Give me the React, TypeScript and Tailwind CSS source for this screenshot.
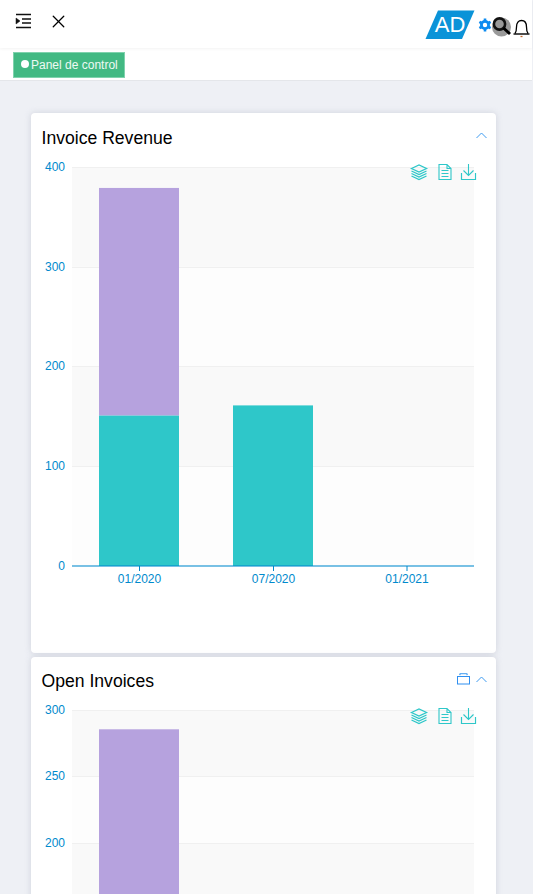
import { X } from "lucide-react"

const AXIS = "#008acd"
const TEAL = "#2ec7c9"
const PURPLE = "#b6a2de"

type Bar = { x: number; stacks: { value: number; color: string }[] }

const X_LABELS = [
	{ x: 108, label: "01/2020" },
	{ x: 242, label: "07/2020" },
	{ x: 375.5, label: "01/2021" },
]

function Chart({ max, step, bars, height, top }: { max: number; step: number; bars: Bar[]; height: number; top: number }) {
	const plotH = 399
	const left = 41
	const right = 443
	const y = (v: number) => top + plotH - (v / max) * plotH
	const snap = (v: number) => Math.floor(y(v) + 0.49)
	const ticks: number[] = []
	for (let v = 0; v <= max; v += step) ticks.push(v)

	return (
		<svg width={465} height={height} className="block" style={{ fontFamily: "'Liberation Sans', sans-serif" }}>
			{/* Bands */}
			{ticks.slice(1).map((v, i) => (
				<rect
					key={v}
					x={left}
					y={y(v)}
					width={right - left}
					height={y(ticks[i]) - y(v)}
					fill={(ticks.length - 2 - i) % 2 === 0 ? "#f9f9f9" : "#fdfdfd"}
				/>
			))}
			{ticks.slice(1).map(v => (
				<line key={v} x1={left} x2={right} y1={snap(v) + 0.5} y2={snap(v) + 0.5} stroke="#f0f0f0" />
			))}

			{/* Bars */}
			{bars.map(bar => {
				let base = 0
				return bar.stacks.map(s => {
					const rect = (
						<rect key={s.color} x={bar.x} y={y(base + s.value)} width={80} height={y(base) - y(base + s.value)} fill={s.color} />
					)
					base += s.value
					return rect
				})
			})}

			{/* Axes */}
			{ticks
				.filter(v => y(v) + 6 < height)
				.map(v => (
					<text key={v} x={34} y={snap(v) + 4} textAnchor="end" fontSize={12} fill={AXIS}>
						{v}
					</text>
				))}
			{top + plotH < height && (
				<>
					<line x1={left} x2={right} y1={top + plotH} y2={top + plotH} stroke={AXIS} strokeOpacity={0.7} strokeWidth={1.5} />
					{X_LABELS.map(l => (
						<g key={l.label}>
							<line x1={l.x + 0.5} x2={l.x + 0.5} y1={top + plotH} y2={top + plotH + 5} stroke={AXIS} />
							<text x={l.x + 0.5} y={top + plotH + 17} textAnchor="middle" fontSize={12} fill={AXIS}>
								{l.label}
							</text>
						</g>
					))}
				</>
			)}

			{/* Toolbox */}
			<g fill="none" stroke={TEAL} strokeWidth={1.1}>
				<path d="M380.5 11.5 L388 8 L395.5 11.5 L388 15 Z" strokeWidth={1.3} />
				<path d="M380.5 14 L388 17.5 L395.5 14 M380.5 16.5 L388 20 L395.5 16.5 M380.5 19 L388 22.5 L395.5 19" strokeWidth={1.3} />
				<path d="M408 7.5 H416 L420 11.5 V22.5 H408 Z M416 7.5 V11.5 H420 M410.5 13.5 H417.5 M410.5 16.5 H417.5 M410.5 19.5 H417.5" />
				<path d="M437.5 7 V18 M432.5 13.5 L437.5 18.5 L442.5 13.5" />
				<path d="M430.5 16 V22.5 H444.5 V16" strokeWidth={1.2} />
			</g>
		</svg>
	)
}

function Card({ title, children, className, extra }: { title: string; children: React.ReactNode; className: string; extra?: boolean }) {
	return (
		<section className={`shrink-0 rounded-[4px] bg-white shadow-[0_0_6px_rgba(170,175,190,0.45)] overflow-hidden ${className}`}>
			<div className="flex h-[44px] items-center justify-between pl-[10.5px] pr-[9px]">
				<h2 className={`text-[17.6px] text-black ${extra ? "pt-[4px]" : "pt-[6px]"}`}>{title}</h2>
				<div className="flex items-center gap-[6px] pt-[1px]">
					{extra && (
						<svg width="13" height="12" viewBox="0 0 13 12" fill="none" className="mb-[2px]">
							<path d="M2.5 2 L3.5 0.5 H9.5 L10.5 2" stroke="#3f9bf0" strokeWidth="1.5" opacity="0.8" />
							<rect x="0.5" y="3.5" width="12" height="7.5" stroke="#2f8ff0" />
						</svg>
					)}
					<svg width="11" height="7" viewBox="0 0 11 7" fill="none">
						<path d="M0.5 6 L5.5 1 L10.5 6" stroke="#3f9bf0" />
					</svg>
				</div>
			</div>
			{children}
		</section>
	)
}

export default function App() {
	return (
		<div className="h-[894px] w-[533px] overflow-hidden bg-[#eef0f5] font-['Liberation_Sans',sans-serif]">
			{/* Top bar */}
			<header className="relative flex h-[48px] w-[532px] items-start justify-between bg-white shadow-[0_1px_3px_rgba(0,0,0,0.05)]">
				<div className="flex items-center gap-[16px] pl-[15px] pt-[11px]">
					<svg width="17" height="16" viewBox="0 0 17 16" fill="none" stroke="#111" strokeWidth="1.5" className="mb-[1px]">
						<path d="M1 1.5 H16 M7 6 H16 M7 10 H16 M1 14.5 H16" />
						<path d="M1 5 L5 8 L1 11 Z" fill="#111" strokeWidth="0.5" />
					</svg>
					<X size={21} strokeWidth={1.5} className="text-black" />
				</div>
				<div className="flex items-start pr-[2px] pt-[10px]">
					<div className="relative h-[29px] w-[50px]">
						<svg width="50" height="29" viewBox="0 0 50 29" className="absolute inset-0">
							<path d="M13 0.5 H49.5 L37 29 H0.5 Z" fill="#0a93d8" />
						</svg>
						<span className="absolute inset-0 text-center text-[22px] leading-[29px] text-white">AD</span>
					</div>
					<svg width="14" height="14" viewBox="0 0 14 14" fill="none" className="mt-[8px] ml-[3px]">
						<circle cx="7" cy="7" r="3.6" stroke="#0d8bf0" strokeWidth="2.8" />
						<path d="M7 0.5 V3 M7 11 V13.5 M1.4 3.8 L3.5 5 M10.5 9 L12.6 10.2 M1.4 10.2 L3.5 9 M10.5 5 L12.6 3.8" stroke="#0d8bf0" strokeWidth="2.6" />
					</svg>
					<svg width="20" height="20" viewBox="0 0 20 20" fill="none" className="mt-[7px]">
						<circle cx="9.5" cy="10" r="9.5" fill="#9a9a9a" />
						<circle cx="7.5" cy="7" r="5.6" stroke="#111" strokeWidth="2.6" />
						<path d="M11.5 11 L18 17" stroke="#000" strokeWidth="3" />
					</svg>
					<svg width="17" height="19" viewBox="0 0 17 19" fill="none" className="mt-[9px] ml-[1px]" stroke="#000" strokeWidth="1.3">
						<path d="M2 14.5 C3.2 13 3.5 11 3.5 8 C3.5 4 5.5 1.5 8.5 1.5 C11.5 1.5 13.5 4 13.5 8 C13.5 11 13.8 13 15 14.5" />
						<path d="M0.5 15 H16.5" strokeWidth="1.4" />
						<path d="M7.5 17.5 H9.5" stroke="#c8692a" />
					</svg>
				</div>
			</header>

			{/* Tabs */}
			<div className="h-[33px] w-[532px] border-b border-[#e4e6ea] bg-white pl-[13px] pt-[4px]">
				<div className="flex h-[26px] w-[112px] items-center gap-[2px] whitespace-nowrap border border-[#7fd2ad] bg-[#42b983] pl-[7px] text-[12px] text-[#eef9f3]">
					<span className="mb-[2px] h-[8px] w-[8px] shrink-0 rounded-full bg-white" />
					Panel de control
				</div>
			</div>

			{/* Cards */}
			<main className="ml-[31px] flex w-[465px] flex-col gap-[4px] pt-[32px]">
				<Card title="Invoice Revenue" className="h-[540px]">
					<Chart
						max={400}
						step={100}
						height={496}
						top={10}
						bars={[
							{ x: 68, stacks: [{ value: 151, color: TEAL }, { value: 228, color: PURPLE }] },
							{ x: 202, stacks: [{ value: 161, color: TEAL }] },
						]}
					/>
				</Card>
				<Card title="Open Invoices" extra className="h-[300px]">
					<Chart
						max={300}
						step={50}
						height={193}
						top={9}
						bars={[{ x: 68, stacks: [{ value: 100, color: TEAL }, { value: 185.5, color: PURPLE }] }]}
					/>
				</Card>
			</main>
		</div>
	)
}
